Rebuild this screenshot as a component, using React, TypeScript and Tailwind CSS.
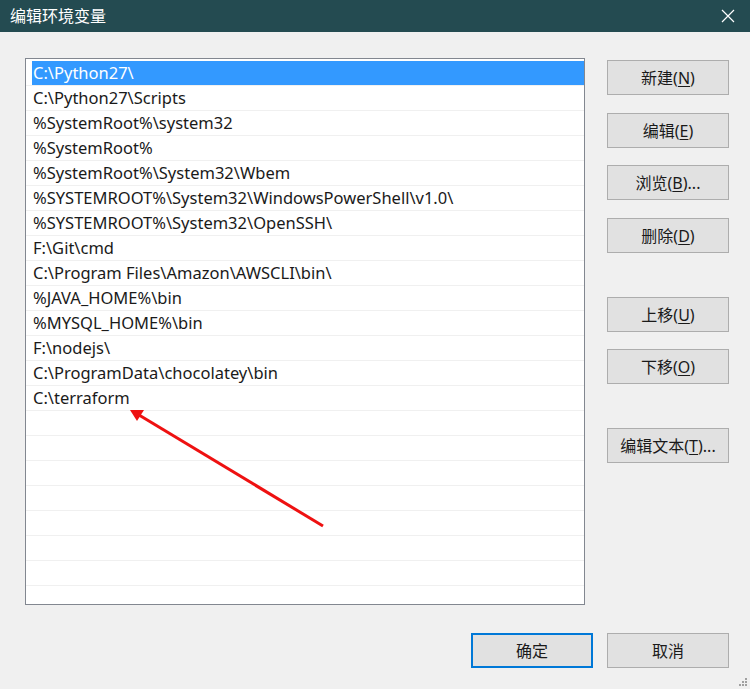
import React from "react";

const paths = [
  "C:\\Python27\\",
  "C:\\Python27\\Scripts",
  "%SystemRoot%\\system32",
  "%SystemRoot%",
  "%SystemRoot%\\System32\\Wbem",
  "%SYSTEMROOT%\\System32\\WindowsPowerShell\\v1.0\\",
  "%SYSTEMROOT%\\System32\\OpenSSH\\",
  "F:\\Git\\cmd",
  "C:\\Program Files\\Amazon\\AWSCLI\\bin\\",
  "%JAVA_HOME%\\bin",
  "%MYSQL_HOME%\\bin",
  "F:\\nodejs\\",
  "C:\\ProgramData\\chocolatey\\bin",
  "C:\\terraform",
];

const font = {
  fontFamily: '"Noto Sans", "Noto Sans CJK SC", sans-serif',
};

function Btn({
  label,
  hot,
  tail = "",
  primary = false,
  className = "",
}: {
  label: string;
  hot?: string;
  tail?: string;
  primary?: boolean;
  className?: string;
}) {
  return (
    <button
      className={`flex h-[35px] w-[122px] items-center justify-center bg-[#e1e1e1] text-[16px] text-[#1a1a1a] ${
        primary ? "border-2 border-[#0078d7]" : "border border-[#adadad]"
      } ${className}`}
    >
      {label}
      {hot && (
        <>
          (<span className="underline underline-offset-2">{hot}</span>){tail}
        </>
      )}
    </button>
  );
}

export default function App() {
  const rows = [...paths, ...Array(8).fill("")];

  return (
    <div
      className="relative flex h-[689px] w-[750px] flex-col overflow-hidden bg-[#f0f0f0]"
      style={font}
    >
      <div className="flex h-[32px] shrink-0 items-center justify-between bg-[#244b51] pl-[10px] pr-[15px]">
        <span className="text-[16px] text-white">编辑环境变量</span>
        <svg width="14" height="14" viewBox="0 0 14 14">
          <path d="M1 1 L13 13 M13 1 L1 13" stroke="#fff" strokeWidth="1.2" />
        </svg>
      </div>

      <div className="flex pl-[25px] pt-[26px]">
        <div className="relative h-[547px] w-[560px] overflow-hidden border border-[#828790] bg-white pt-[2px]">
          {rows.map((p, i) => (
            <div
              key={i}
              className="flex h-[25px] items-center border-b border-[#f0f0f0] text-[16.5px] text-[#1a1a1a]"
            >
              {i === 0 ? (
                <div className="ml-[6px] flex h-full flex-1 items-center bg-[#3399ff] pl-[1px] pt-[1px] text-white">
                  {p}
                </div>
              ) : (
                <span className="pl-[7px] pt-[1px]">{p}</span>
              )}
            </div>
          ))}
          <svg
            className="absolute left-0 top-0"
            width="560"
            height="547"
            viewBox="25 58 560 547"
          >
            <line
              x1="322"
              y1="525"
              x2="138"
              y2="414"
              stroke="#ee1111"
              strokeWidth="3"
            />
            <polygon points="129,409 143,409 136,420" fill="#ee1111" />
          </svg>
        </div>

        <div className="ml-[22px] flex flex-col pt-[2px]">
          <Btn label="新建" hot="N" />
          <Btn label="编辑" hot="E" className="mt-[18px]" />
          <Btn label="浏览" hot="B" tail="..." className="mt-[17px]" />
          <Btn label="删除" hot="D" className="mt-[18px]" />
          <Btn label="上移" hot="U" className="mt-[44px]" />
          <Btn label="下移" hot="O" className="mt-[17px]" />
          <Btn label="编辑文本" hot="T" tail="..." className="mt-[44px]" />
        </div>
      </div>

      <div className="flex justify-end gap-[14px] pr-[21px] pt-[28px]">
        <Btn label="确定" primary />
        <Btn label="取消" />
      </div>

      <svg
        className="absolute bottom-[3px] right-[3px]"
        width="10"
        height="10"
        viewBox="0 0 10 10"
      >
        {[
          [8, 2],
          [8, 5],
          [5, 5],
          [8, 8],
          [5, 8],
          [2, 8],
        ].map(([x, y], i) => (
          <rect key={i} x={x} y={y} width="2" height="2" fill="#a0a0a0" />
        ))}
      </svg>
    </div>
  );
}
